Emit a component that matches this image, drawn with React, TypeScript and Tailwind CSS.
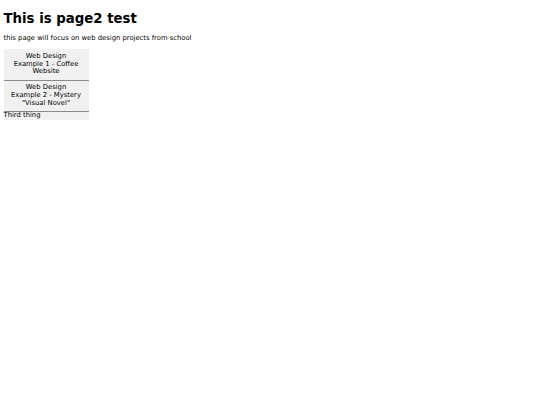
export default function App() {
  return (
    <div className="min-h-screen bg-white px-[3.5px] pt-[10.5px] text-black" style={{ fontFamily: '"DejaVu Sans", Verdana, sans-serif' }}>
      <h1 className="text-[13.3px] font-bold leading-[1.16]">This is page2 test</h1>
      <p className="mt-[9.5px] text-[6.8px] leading-[1.16]">this page will focus on web design projects from school</p>
      <div className="mt-[6px] flex w-[85px] flex-col bg-[#f1f1f1] text-[6.8px] leading-[1.14]">
        <div className="border-b border-[#8a8a8a] px-[7.5px] py-[3.6px] text-center">
          Web Design Example 1 - Coffee Website
        </div>
        <div className="border-b border-[#8a8a8a] px-[7.5px] py-[3.6px] text-center">
          Web Design Example 2 - Mystery "Visual Novel"
        </div>
        <div className="pb-[0.5px] text-left">Third thing</div>
      </div>
    </div>
  );
}
